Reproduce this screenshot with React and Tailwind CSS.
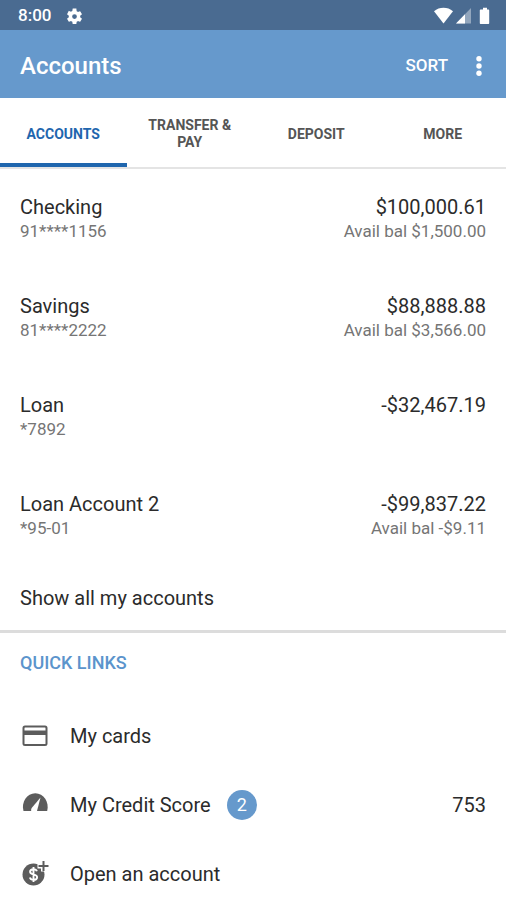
import React from "react";

const tabs = ["Accounts", "Transfer & Pay", "Deposit", "More"];

const accounts = [
  { name: "Checking", number: "91****1156", balance: "$100,000.61", available: "Avail bal $1,500.00" },
  { name: "Savings", number: "81****2222", balance: "$88,888.88", available: "Avail bal $3,566.00" },
  { name: "Loan", number: "*7892", balance: "-$32,467.19" },
  { name: "Loan Account 2", number: "*95-01", balance: "-$99,837.22", available: "Avail bal -$9.11" },
];

function GearIcon() {
  return (
    <svg viewBox="0 0 24 24" className="size-[19px]" fill="currentColor" aria-hidden="true">
      <path d="M19.14 12.94c.04-.3.06-.61.06-.94s-.02-.64-.07-.94l2.03-1.58a.49.49 0 0 0 .12-.61l-1.92-3.32a.49.49 0 0 0-.59-.22l-2.39.96c-.5-.38-1.03-.7-1.62-.94l-.36-2.54A.48.48 0 0 0 13.92 2h-3.84c-.24 0-.43.17-.47.41l-.36 2.54c-.59.24-1.13.57-1.62.94l-2.39-.96a.48.48 0 0 0-.59.22L2.74 8.87c-.12.21-.08.47.12.61l2.03 1.58c-.05.3-.09.63-.09.94s.02.64.07.94l-2.03 1.58a.49.49 0 0 0-.12.61l1.92 3.32c.12.22.37.29.59.22l2.39-.96c.5.38 1.03.7 1.62.94l.36 2.54c.05.24.24.41.48.41h3.84c.24 0 .44-.17.47-.41l.36-2.54c.59-.24 1.13-.56 1.62-.94l2.39.96c.22.08.47 0 .59-.22l1.92-3.32a.49.49 0 0 0-.12-.61zM12 15a3 3 0 1 1 0-6 3 3 0 0 1 0 6z" />
    </svg>
  );
}

function StatusIcons() {
  return (
    <svg viewBox="0 0 58 18" className="h-[18px] w-[58px]" fill="#fff" aria-hidden="true">
      <path d="M0 4.2C5.4-.4 13.6-.4 19 4.2L9.5 16.5z" />
      <path d="M37 1v15.5H22z" opacity=".4" />
      <path d="M31 7.2v9.3h-9z" />
      <path d="M49 .8h4v1.6h1.200c.6 0 1 .4 1 1v12.600c0 .6-.4 1-1 1h-7.400c-.6 0-1-.4-1-1V3.400c0-.6.4-1 1-1H49z" />
    </svg>
  );
}

function CardIcon() {
  return (
    <svg viewBox="0 0 30 30" className="size-[30px]" aria-hidden="true">
      <rect x="3.500" y="5.500" width="23" height="18.500" rx="1.500" fill="none" stroke="#5c5c5c" strokeWidth="2" />
      <path d="M3 9.500h24v4.500H3z" fill="#5c5c5c" />
    </svg>
  );
}

function GaugeIcon() {
  return (
    <svg viewBox="0 0 30 30" className="size-[30px]" aria-hidden="true">
      <path d="M3.500 21C1 12 7 3.300 15.300 3.300S29.500 12 27.200 21z" fill="#5c5c5c" />
      <path d="M20.500 7.500 17 21h-5.800c-.2-1.200 0-2.200.7-3.200z" fill="#fff" />
    </svg>
  );
}

function OpenAccountIcon() {
  return (
    <svg viewBox="0 0 30 30" className="size-[30px]" aria-hidden="true">
      <circle cx="13.500" cy="15.500" r="11" fill="#5c5c5c" />
      <path d="M16.900 12.300c-.5-1.400-1.700-2.100-3.400-2.100-2 0-3.400 1-3.400 2.600 0 3.500 7 1.800 7 5.400 0 1.700-1.500 2.700-3.600 2.700-1.900 0-3.200-.8-3.600-2.300M13.500 8v15" fill="none" stroke="#fff" strokeWidth="1.900" />
      <path d="M23.500 1.500v11M17.500 7h11.500" fill="none" stroke="#fff" strokeWidth="5" />
      <path d="M23.500 2v10M18.500 7h10" fill="none" stroke="#5c5c5c" strokeWidth="2" />
    </svg>
  );
}

const links = [
  { label: "My cards", Icon: CardIcon },
  { label: "My Credit Score", Icon: GaugeIcon, badge: "2", value: "753" },
  { label: "Open an account", Icon: OpenAccountIcon },
];

export default function App() {
  return (
    <div className="min-h-screen w-full bg-white font-[Roboto,sans-serif] text-[#2b2b2b]">
      <div className="flex h-[30px] items-center justify-between bg-[#4a6b91] pt-[2px] pr-[14px] pl-[18px] text-white">
        <div className="flex items-center gap-[14px]">
          <span className="text-[17px] font-medium">8:00</span>
          <GearIcon />
        </div>
        <StatusIcons />
      </div>

      <header className="flex h-[68px] items-center justify-between bg-[#6699cc] pt-[3px] pr-4 pl-5 text-white">
        <h1 className="text-2xl font-medium">Accounts</h1>
        <div className="flex items-center gap-5">
          <button type="button" className="text-[17px] font-medium">SORT</button>
          <button type="button" aria-label="More options" className="flex h-8 w-[22px] items-center justify-center">
            <svg viewBox="0 0 6 20" className="h-5 w-[6px]" fill="currentColor" aria-hidden="true">
              <circle cx="3" cy="2.700" r="2.700" />
              <circle cx="3" cy="10" r="2.700" />
              <circle cx="3" cy="17.300" r="2.700" />
            </svg>
          </button>
        </div>
      </header>

      <nav className="grid h-[71px] grid-cols-4 border-b-2 border-[#e4e4e4]">
        {tabs.map((tab, i) => (
          <a
            key={tab}
            href="#"
            aria-current={i === 0 ? "page" : undefined}
            className={
              i === 0
                ? "flex items-center justify-center border-b-4 border-[#1f66ae] px-3 pt-[7px] text-center text-sm leading-[17px] font-bold text-[#1f66ae] uppercase"
                : "flex items-center justify-center border-b-4 border-transparent px-3 pt-[7px] text-center text-sm leading-[17px] font-bold text-[#555] uppercase"
            }
          >
            {tab}
          </a>
        ))}
      </nav>

      <main>
        <ul>
          {accounts.map((a) => (
            <li key={a.name} className="flex justify-between px-5 pt-[26px] pb-[25px]">
              <div>
                <p className="text-xl leading-6">{a.name}</p>
                <p className="text-[17px] leading-6 text-[#757575]">{a.number}</p>
              </div>
              <div className="text-right">
                <p className="text-xl leading-6">{a.balance}</p>
                {a.available && <p className="text-[17px] leading-6 text-[#757575]">{a.available}</p>}
              </div>
            </li>
          ))}
        </ul>
        <button type="button" className="flex h-[68px] w-full items-center border-b-[3px] border-[#dcdcdc] px-5 text-left text-xl">
          Show all my accounts
        </button>

        <section>
          <h2 className="px-5 pt-4 pb-9 text-lg leading-7 font-medium text-[#5b94cc]">QUICK LINKS</h2>
          <ul className="flex flex-col gap-6">
            {links.map(({ label, Icon, badge, value }) => (
              <li key={label}>
                <a href="#" className="flex h-[45px] items-center px-5 text-xl">
                  <Icon />
                  <span className="ml-5">{label}</span>
                  {badge && (
                    <span className="ml-4 flex size-[30px] items-center justify-center rounded-full bg-[#6699cc] text-lg text-white">
                      {badge}
                    </span>
                  )}
                  {value && <span className="ml-auto">{value}</span>}
                </a>
              </li>
            ))}
          </ul>
        </section>
      </main>
    </div>
  );
}
